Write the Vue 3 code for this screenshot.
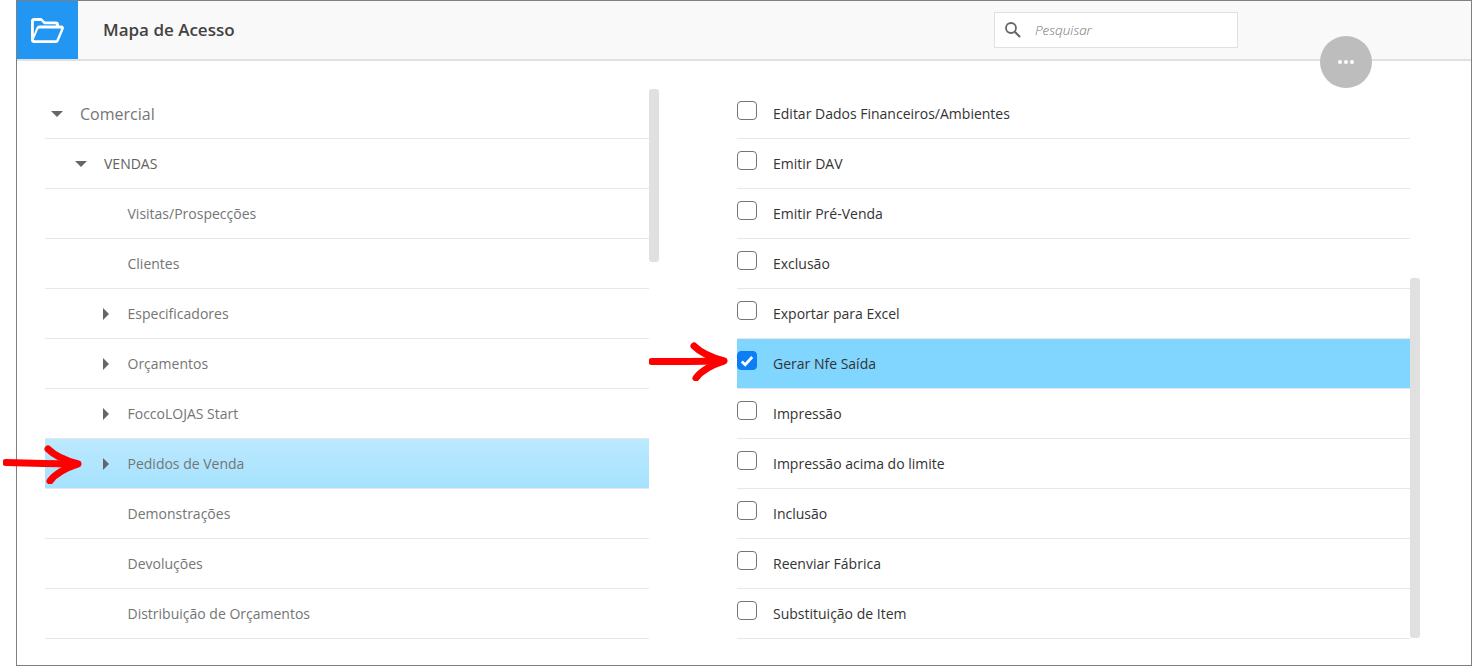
<script setup>
const tree = [
  { label: 'Comercial', level: 0, arrow: 'down', cls: 'root' },
  { label: 'VENDAS', level: 1, arrow: 'down' },
  { label: 'Visitas/Prospecções', level: 2 },
  { label: 'Clientes', level: 2 },
  { label: 'Especificadores', level: 2, arrow: 'right' },
  { label: 'Orçamentos', level: 2, arrow: 'right' },
  { label: 'FoccoLOJAS Start', level: 2, arrow: 'right' },
  { label: 'Pedidos de Venda', level: 2, arrow: 'right', cls: 'selected' },
  { label: 'Demonstrações', level: 2 },
  { label: 'Devoluções', level: 2 },
  { label: 'Distribuição de Orçamentos', level: 2 },
]
const perms = [
  { label: 'Editar Dados Financeiros/Ambientes' },
  { label: 'Emitir DAV' },
  { label: 'Emitir Pré-Venda' },
  { label: 'Exclusão' },
  { label: 'Exportar para Excel' },
  { label: 'Gerar Nfe Saída', on: true },
  { label: 'Impressão' },
  { label: 'Impressão acima do limite' },
  { label: 'Inclusão' },
  { label: 'Reenviar Fábrica' },
  { label: 'Substituição de Item' },
]
</script>

<template>
  <div class="page">
    <div class="frame">
      <header class="header">
        <div class="logo">
          <svg width="33" height="25" viewBox="0 0 33 25">
            <path fill="#fff" fill-rule="evenodd" d="M3 0H9.5C10.3 0 11 .3 11.500 .9L14 3.500H25C26.700 3.500 28 4.800 28 6.500V7.500H30.500C32.300 7.500 33.400 9.300 32.700 10.900L27.800 22.700C27.200 24.100 26 25 24.500 25H3C1.300 25 0 23.700 0 22V3C0 1.300 1.300 0 3 0ZM8.700 10.500C7.900 10.500 7.300 10.900 7 11.600L2.900 21.200C2.600 21.800 3.100 22.300 3.700 22.300H24.200C24.900 22.300 25.500 21.900 25.800 21.200L29.900 11.600C30.200 11 29.700 10.500 29.100 10.500ZM25 7.500V7C25 6.500 24.600 6.200 24.200 6.200H13L10 3H3.800C3.200 3 2.800 3.400 2.800 4V16.500L5.100 10.500C5.700 8.800 7 7.500 8.700 7.500Z"/>
          </svg>
        </div>
        <h1 class="title">Mapa de Acesso</h1>
        <div class="search">
          <svg class="search-icon" width="18" height="18" viewBox="0 0 18 18" fill="none">
            <circle cx="7" cy="7" r="5" stroke="#666" stroke-width="1.8"/>
            <path d="M10.8 10.800L16 16" stroke="#666" stroke-width="2.2"/>
          </svg>
          <span class="placeholder">Pesquisar</span>
        </div>
      </header>

      <button class="fab" aria-label="Mais opções"><i></i><i></i><i></i></button>

      <main class="content">
        <section class="tree">
          <div v-for="row in tree" :key="row.label" class="row" :class="[row.cls, 'lvl' + row.level]">
            <span class="caret" :class="row.arrow"></span>
            <span class="tree-label">{{ row.label }}</span>
          </div>
        </section>
        <section class="perms">
          <div v-for="row in perms" :key="row.label" class="row perm" :class="{ on: row.on }">
            <span class="box">
              <svg v-if="row.on" width="14" height="12" viewBox="0 0 14 12" fill="none">
                <path d="M1.800 6.400L5.200 9.800L12.200 2" stroke="#fff" stroke-width="2.800"/>
              </svg>
            </span>
            <span class="perm-label">{{ row.label }}</span>
          </div>
        </section>
      </main>

      <div class="scroll scroll-left"></div>
      <div class="scroll scroll-right"></div>
    </div>

    <svg class="arrow arrow-left" width="80" height="40" viewBox="0 0 80 40" fill="none">
      <path d="M3 18.500L40 19.500L74 20" stroke="#f00" stroke-width="7" stroke-linecap="round"/>
      <path d="M45 5C52 12 64 17 75 20C63 24 52 30 47 37" stroke="#f00" stroke-width="7" stroke-linecap="round" stroke-linejoin="round"/>
    </svg>
    <svg class="arrow arrow-right" width="80" height="40" viewBox="0 0 80 40" fill="none">
      <path d="M3 20.500L40 20.500L74 20" stroke="#f00" stroke-width="7" stroke-linecap="round"/>
      <path d="M45 5C52 12 64 17 75 20C63 24 52 30 47 37" stroke="#f00" stroke-width="7" stroke-linecap="round" stroke-linejoin="round"/>
    </svg>
  </div>
</template>

<style>
html, body { margin: 0; background: #fff; }
</style>

<style scoped>
.page {
  position: relative;
  width: 1472px;
  height: 666px;
  overflow: hidden;
  background: #fff;
  font-family: "Open Sans", "Noto Sans", sans-serif;
}
.frame {
  position: relative;
  box-sizing: border-box;
  width: 1456px;
  height: 666px;
  margin-left: 16px;
  border: 1px solid #808080;
  overflow: hidden;
}
.header {
  display: flex;
  align-items: center;
  height: 60px;
  box-sizing: border-box;
  background: #f9f9f9;
  border-bottom: 2px solid #e0e0e0;
}
.logo {
  display: flex;
  align-items: center;
  justify-content: center;
  width: 61px;
  height: 58px;
  background: #2196f3;
}
.title {
  margin: -2px 0 0 25px;
  width: 891px;
  font-size: 17px;
  font-weight: 600;
  color: #424242;
}
.search {
  display: flex;
  align-items: center;
  box-sizing: border-box;
  width: 244px;
  height: 36px;
  background: #fff;
  border: 1px solid #e0e0e0;
}
.search-icon { margin-left: 9px; }
.placeholder {
  margin-left: 13px;
  font-size: 13.500px;
  font-style: italic;
  font-weight: 300;
  color: #757575;
}
.fab {
  position: absolute;
  left: 1303px;
  top: 35px;
  display: flex;
  align-items: center;
  justify-content: center;
  gap: 2px;
  width: 52px;
  height: 52px;
  padding: 0;
  border: 0;
  border-radius: 50%;
  background: #bdbdbd;
}
.fab i {
  width: 4px;
  height: 4px;
  border-radius: 50%;
  background: #fff;
}
.content {
  display: flex;
  padding: 28px 0 0 28px;
}
.tree { width: 604px; }
.perms { width: 673px; margin-left: 88px; }
.row {
  display: flex;
  align-items: center;
  box-sizing: border-box;
  height: 50px;
  border-bottom: 1px solid #e8e8e8;
  font-size: 14px;
}
.caret {
  flex: none;
  width: 0;
  height: 0;
  border-style: solid;
  border-color: transparent;
}
.caret.down {
  border-width: 6px 6px 0;
  border-top-color: #666;
}
.caret.right {
  border-width: 6px 0 6px 6px;
  border-left-color: #666;
}
.lvl0 { padding-left: 6px; }
.lvl0 .tree-label { margin-left: 17px; font-size: 16px; color: #757575; }
.lvl1 { padding-left: 30px; }
.lvl1 .tree-label { margin-left: 17px; color: #616161; }
.lvl2 { padding-left: 58px; }
.lvl2 .tree-label { color: #757575; margin-left: 18.500px; }
.lvl2 .caret:not(.right) { width: 6px; border: 0; }
.selected {
  background: linear-gradient(#bbe9ff, #a6e2fd);
}
.perm .box {
  flex: none;
  display: flex;
  align-items: center;
  justify-content: center;
  box-sizing: border-box;
  width: 19.500px;
  height: 19.500px;
  margin-top: -6px;
  background: #fff;
  border: 1.500px solid #757575;
  border-radius: 4px;
}
.perm-label {
  margin-left: 16.500px;
  color: #333;
}
.perm.on { background: #80d6ff; }
.perm.on .box {
  background: #0b7ef5;
  border-color: #0b7ef5;
}
.scroll {
  position: absolute;
  width: 10px;
  background: #e0e0e0;
  border-radius: 3px;
}
.scroll-left { left: 632px; top: 88px; height: 173px; }
.scroll-right { left: 1393px; top: 277px; height: 360px; }
.arrow { position: absolute; }
.arrow-left { left: 3px; top: 444px; }
.arrow-right { left: 649px; top: 341px; }
</style>
